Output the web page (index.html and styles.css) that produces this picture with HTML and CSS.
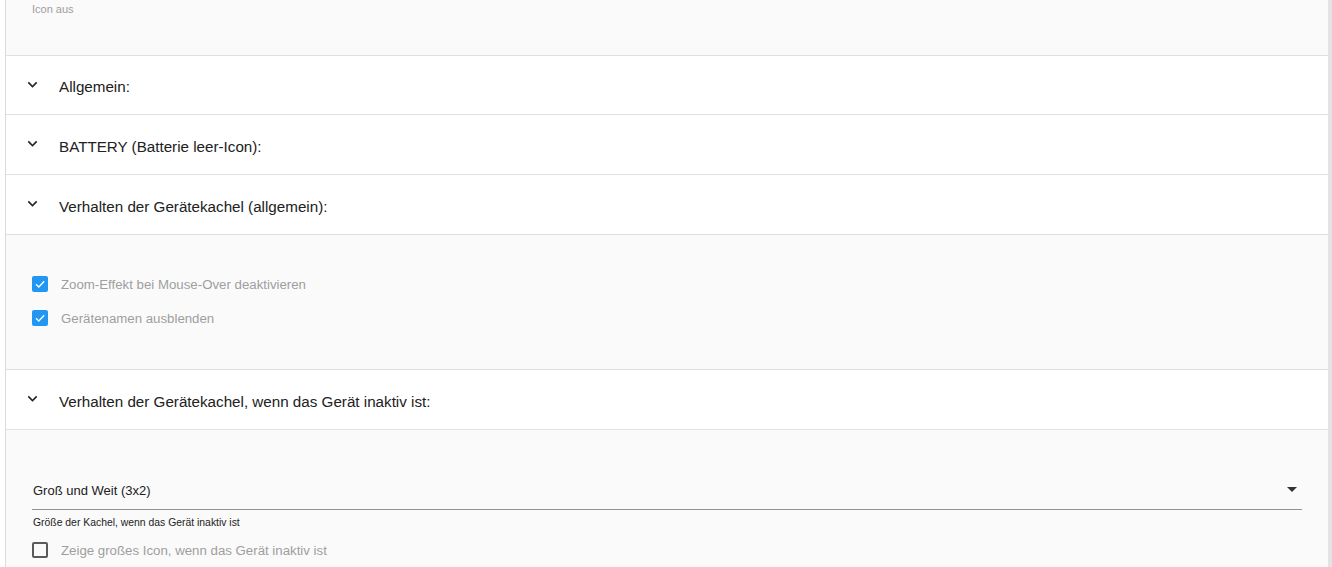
FILE: index.html
```html
<!DOCTYPE html>
<html>
<head>
    <title>Geräteeinstellungen</title>
    <link rel="stylesheet" href="styles.css">
</head>
<body>
    <div class="panel">
        <div class="section top">
            <div class="helper muted">Icon aus</div>
        </div>

        <div class="header first">
            <svg class="chevron" viewBox="0 0 24 24"><path d="M7.41 8.59L12 13.17l4.59-4.58L18 10l-6 6-6-6 1.41-1.41z"/></svg>
            <span>Allgemein:</span>
        </div>
        <div class="header">
            <svg class="chevron" viewBox="0 0 24 24"><path d="M7.41 8.59L12 13.17l4.59-4.58L18 10l-6 6-6-6 1.41-1.41z"/></svg>
            <span>BATTERY (Batterie leer-Icon):</span>
        </div>
        <div class="header">
            <svg class="chevron" viewBox="0 0 24 24"><path d="M7.41 8.59L12 13.17l4.59-4.58L18 10l-6 6-6-6 1.41-1.41z"/></svg>
            <span>Verhalten der Gerätekachel (allgemein):</span>
        </div>

        <div class="section body-general">
            <label class="check-row">
                <span class="box checked">
                    <svg viewBox="0 0 16 16"><path d="M4 8.3l2.8 2.7L12.2 5.2" /></svg>
                </span>
                <span class="check-label">Zoom-Effekt bei Mouse-Over deaktivieren</span>
            </label>
            <label class="check-row">
                <span class="box checked">
                    <svg viewBox="0 0 16 16"><path d="M4 8.3l2.8 2.7L12.2 5.2" /></svg>
                </span>
                <span class="check-label">Gerätenamen ausblenden</span>
            </label>
        </div>

        <div class="header">
            <svg class="chevron" viewBox="0 0 24 24"><path d="M7.41 8.59L12 13.17l4.59-4.58L18 10l-6 6-6-6 1.41-1.41z"/></svg>
            <span>Verhalten der Gerätekachel, wenn das Gerät inaktiv ist:</span>
        </div>

        <div class="section body-inactive">
            <div class="select">
                <span>Groß und Weit (3x2)</span>
                <svg class="arrow" viewBox="0 0 24 24"><path d="M7 10l5 5 5-5z"/></svg>
            </div>
            <div class="helper">Größe der Kachel, wenn das Gerät inaktiv ist</div>
            <label class="check-row">
                <span class="box"></span>
                <span class="check-label">Zeige großes Icon, wenn das Gerät inaktiv ist</span>
            </label>
        </div>
    </div>
</body>
</html>
```

FILE: styles.css
```css
body {
    margin: 0;
    padding: 0;
    background-color: #fff;
    font-family: "Liberation Sans", Arial, sans-serif;
    color: #212121;
    overflow: hidden;
}

.panel {
    margin-left: 5px;
    border-left: 1px solid #dcdcdc;
    border-right: 4px solid #e3e3e3;
    min-height: 567px;
}

.section {
    background-color: #fafafa;
    border-bottom: 1px solid #e0e0e0;
    padding: 0 26px;
}

.top {
    height: 56px;
    padding-top: 2px;
    box-sizing: border-box;
}

.helper {
    font-size: 10.4px;
    line-height: 14px;
    color: #222;
}

.helper.muted {
    font-size: 11px;
    line-height: 15px;
    color: #9e9e9e;
}

.header {
    display: flex;
    align-items: center;
    padding-left: 17px;
    padding-top: 3px;
    box-sizing: border-box;
    height: 60px;
    background-color: #fff;
    border-bottom: 1px solid #e0e0e0;
    font-size: 15.2px;
}

.header.first {
    height: 59px;
}

.chevron {
    width: 19px;
    height: 19px;
    fill: #222;
    margin-right: 17px;
    margin-top: -5px;
}

.body-general {
    padding-top: 32px;
    padding-bottom: 34px;
}

.check-row {
    display: flex;
    align-items: center;
    height: 34px;
}

.box {
    width: 16px;
    height: 16px;
    box-sizing: border-box;
    border: 2px solid #5a5a5a;
    border-radius: 2px;
    margin-right: 13px;
    display: flex;
}

.box.checked {
    background-color: #2196f3;
    border: none;
}

.box svg {
    width: 16px;
    height: 16px;
    fill: none;
    stroke: #fff;
    stroke-width: 1.3;
}

.check-label {
    font-size: 13.25px;
    color: #9e9e9e;
}

.body-inactive {
    padding-top: 50px;
    border-bottom: none;
    height: 137px;
}

.select {
    display: flex;
    align-items: center;
    justify-content: space-between;
    height: 20px;
    padding-bottom: 9px;
    border-bottom: 1px solid #929292;
    font-size: 13px;
    padding-left: 1px;
}

.arrow {
    width: 24px;
    height: 24px;
    fill: #333;
    margin-right: -2px;
    margin-top: -2px;
}

.body-inactive .helper {
    margin-top: 6px;
    padding-left: 1px;
}

.body-inactive .check-row {
    height: 30px;
    margin-top: 5px;
}
```
